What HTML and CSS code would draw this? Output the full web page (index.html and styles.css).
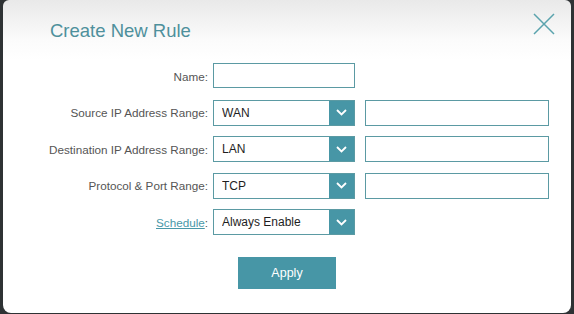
FILE: index.html
```html
<html lang="en">
	<head>
		<meta charset="UTF-8" />
		<meta name="viewport" content="width=device-width, initial-scale=1.0" />
		<title>Create New Rule</title>
		<link rel="stylesheet" href="styles.css">
	</head>
	<body>
		<div class="modal">
			<div class="modal-head">
				<h2 class="modal-title">Create New Rule</h2>
				<button class="close-btn" aria-label="Close">
					<svg width="22" height="22" viewBox="0 0 22 22">
						<path d="M1 1 L21 21 M21 1 L1 21" stroke="#5aa3ad" stroke-width="1.5" fill="none" />
					</svg>
				</button>
			</div>

			<div class="rule-form">
				<label class="field-label" for="ruleName">Name:</label>
				<div class="field">
					<input id="ruleName" class="text-input" type="text" />
				</div>

				<label class="field-label">Source IP Address Range:</label>
				<div class="field">
					<div class="dropdown">
						<select><option>WAN</option><option>LAN</option></select>
						<span class="arrow"><svg width="11" height="7" viewBox="0 0 11 7"><path d="M1 1 L5.5 5.5 L10 1" stroke="#fff" stroke-width="1.8" fill="none" /></svg></span>
					</div>
					<input class="text-input wide" type="text" />
				</div>

				<label class="field-label">Destination IP Address Range:</label>
				<div class="field">
					<div class="dropdown">
						<select><option>LAN</option><option>WAN</option></select>
						<span class="arrow"><svg width="11" height="7" viewBox="0 0 11 7"><path d="M1 1 L5.5 5.5 L10 1" stroke="#fff" stroke-width="1.8" fill="none" /></svg></span>
					</div>
					<input class="text-input wide" type="text" />
				</div>

				<label class="field-label">Protocol &amp; Port Range:</label>
				<div class="field">
					<div class="dropdown">
						<select><option>TCP</option><option>UDP</option></select>
						<span class="arrow"><svg width="11" height="7" viewBox="0 0 11 7"><path d="M1 1 L5.5 5.5 L10 1" stroke="#fff" stroke-width="1.8" fill="none" /></svg></span>
					</div>
					<input class="text-input wide" type="text" />
				</div>

				<label class="field-label"><a href="#" class="link">Schedule</a>:</label>
				<div class="field">
					<div class="dropdown">
						<select><option>Always Enable</option></select>
						<span class="arrow"><svg width="11" height="7" viewBox="0 0 11 7"><path d="M1 1 L5.5 5.5 L10 1" stroke="#fff" stroke-width="1.8" fill="none" /></svg></span>
					</div>
				</div>
			</div>

			<div class="actions">
				<button class="apply-btn">Apply</button>
			</div>
		</div>
	</body>
</html>
```

FILE: styles.css
```css
html, body {
	margin: 0;
	height: 100%;
}
body {
	font-family: "Liberation Sans", Arial, sans-serif;
	background: #2e3234;
	padding: 0 3px 1px 3px;
	box-sizing: border-box;
	display: flex;
}
.modal {
	flex: 1;
	background: linear-gradient(to bottom, #e9e9e9 0px, #fbfbfb 40px, #ffffff 60px);
	border-radius: 6px 6px 8px 8px;
	display: flex;
	flex-direction: column;
}
.modal-head {
	display: flex;
	justify-content: space-between;
	align-items: flex-start;
	padding: 20px 16px 0 47px;
}
.modal-title {
	margin: 0;
	font-size: 18.5px;
	line-height: 22px;
	font-weight: normal;
	color: #4e909c;
}
.close-btn {
	margin-top: -7px;
	padding: 0;
	border: none;
	background: none;
	width: 22px;
	height: 22px;
}
.rule-form {
	display: grid;
	grid-template-columns: 205px auto;
	column-gap: 5px;
	row-gap: 10.5px;
	margin-top: 21px;
}
.field-label {
	font-size: 11.7px;
	color: #555;
	text-align: right;
	align-self: center;
}
.link {
	color: #4a98a8;
}
.field {
	display: flex;
	gap: 10px;
	height: 26px;
}
.text-input {
	box-sizing: border-box;
	width: 142px;
	height: 26px;
	border: 1px solid #5b9aa3;
	background: #fff;
	margin: 0;
	padding: 0 8px;
	font-family: inherit;
	font-size: 12px;
}
.field:first-of-type .text-input {
	height: 25px;
}
.text-input.wide {
	width: 184px;
}
.dropdown {
	box-sizing: border-box;
	width: 142px;
	height: 26px;
	border: 1px solid #5b9aa3;
	display: flex;
	background: #fff;
}
.dropdown select {
	flex: 1;
	min-width: 0;
	appearance: none;
	border: none;
	background: transparent;
	padding: 0 8px;
	font-family: inherit;
	font-size: 12px;
	color: #1e1e1e;
	outline: none;
}
.arrow {
	width: 25px;
	background: #4796a6;
	display: flex;
	align-items: center;
	justify-content: center;
}
.actions {
	display: flex;
	justify-content: center;
	margin-top: 22px;
}
.apply-btn {
	width: 98px;
	height: 32px;
	border: none;
	background: #4796a6;
	color: #fff;
	font-family: inherit;
	font-size: 12.5px;
	padding: 0;
}
```
